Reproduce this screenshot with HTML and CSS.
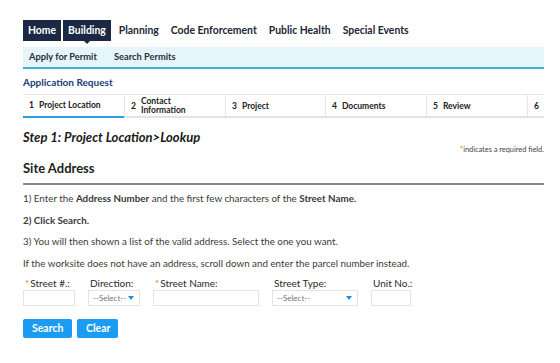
FILE: index.html
```html
<!DOCTYPE html>
<html lang="en">
<head>
    <meta charset="UTF-8">
    <title>Apply for Permit</title>
    <link rel="stylesheet" href="styles.css">
</head>
<body>
<div class="page">
    <!--主导航-->
    <ul class="nav">
        <li class="tab">Home</li>
        <li class="tab active">Building</li>
        <li>Planning</li>
        <li>Code Enforcement</li>
        <li>Public Health</li>
        <li>Special Events</li>
    </ul>
    <!--子导航-->
    <ul class="subnav">
        <li>Apply for Permit</li>
        <li>Search Permits</li>
    </ul>

    <h3 class="app-title">Application Request</h3>
    <!--步骤条-->
    <ul class="steps">
        <li class="on"><span>1</span>Project Location</li>
        <li><span>2</span><em>Contact<br>Information</em></li>
        <li><span>3</span>Project</li>
        <li><span>4</span>Documents</li>
        <li><span>5</span>Review</li>
        <li><span>6</span></li>
    </ul>

    <h2 class="step-title">Step 1: Project Location&gt;Lookup</h2>
    <p class="req-note"><i>*</i>indicates a required field.</p>

    <h2 class="section">Site Address</h2>

    <div class="tips">
        <p>1) Enter the <b>Address Number</b> and the first few characters of the <b>Street Name.</b></p>
        <p><b>2) Click Search.</b></p>
        <p>3) You will then shown a list of the valid address. Select the one you want.</p>
        <p>If the worksite does not have an address, scroll down and enter the parcel number instead.</p>
    </div>

    <!--表单-->
    <div class="fields">
        <div class="field f-num">
            <label><i>*</i>Street #.:</label>
            <div class="input"></div>
        </div>
        <div class="field f-dir">
            <label>Direction:</label>
            <div class="input select"><span>--Select--</span><b></b></div>
        </div>
        <div class="field f-name">
            <label><i>*</i>Street Name:</label>
            <div class="input"></div>
        </div>
        <div class="field f-type">
            <label>Street Type:</label>
            <div class="input select"><span>--Select--</span><b></b></div>
        </div>
        <div class="field f-unit">
            <label>Unit No.:</label>
            <div class="input"></div>
        </div>
    </div>

    <div class="btns">
        <a class="btn search">Search</a>
        <a class="btn clear">Clear</a>
    </div>
</div>
</body>
</html>
```

FILE: styles.css
```css
* {
    margin: 0;
    padding: 0;
    box-sizing: border-box;
}
ul {
    list-style: none;
}
body {
    background-color: #fff;
    font-family: Lato, "Open Sans", sans-serif;
    color: #333;
}
.page {
    width: 521px;
    margin-left: 23px;
    padding-top: 20px;
}

/* 主导航 */
.nav {
    display: flex;
    height: 21px;
    font-size: 10.4px;
    font-weight: 700;
    color: #1c2535;
}
.nav li {
    line-height: 21px;
    padding: 0 6px;
}
.nav li.tab {
    background-color: #1b2944;
    color: #fff;
    margin-right: 2px;
    padding: 0 5px;
    position: relative;
}
.nav li.active:after {
    content: '';
    position: absolute;
    left: 50%;
    bottom: -3px;
    margin-left: -3px;
    border-left: 3px solid transparent;
    border-right: 3px solid transparent;
    border-top: 3px solid #1b2944;
}

/* 子导航 */
.subnav {
    display: flex;
    margin-top: 6px;
    height: 22px;
    background-color: #e6f5fc;
    border-bottom: 2px solid #3fb0cf;
    font-size: 9.3px;
    font-weight: 700;
    color: #2a2f38;
}
.subnav li {
    line-height: 20px;
    padding: 0 6px;
    margin-right: 5px;
}

.app-title {
    margin-top: 6px;
    font-size: 10px;
    line-height: 14px;
    color: #1b3b78;
}

/* 步骤条 */
.steps {
    display: grid;
    grid-template-columns: 101px 101px 100px 101px 101px 1fr;
    margin-top: 5px;
    height: 24px;
    border-top: 1px solid #e6e6e6;
    border-bottom: 2px solid #e3e3e3;
    font-size: 8.5px;
    font-weight: 700;
    color: #222;
}
.steps li {
    display: flex;
    align-items: center;
    padding-left: 6px;
    border-left: 1px solid #e6e6e6;
    height: 21px;
}
.steps li:first-child {
    border-left: none;
}
.steps li.on {
    border-bottom: 2px solid #2d9fd9;
    height: 23px;
    padding-bottom: 2px;
}
.steps span {
    margin-right: 5px;
}
.steps em {
    font-style: normal;
    line-height: 9px;
}

.step-title {
    margin-top: 11px;
    font-size: 13px;
    line-height: 16px;
    font-style: italic;
    font-weight: 700;
    color: #1a1a1a;
}
.req-note {
    text-align: right;
    font-size: 7.4px;
    line-height: 9px;
    color: #444;
}
.req-note i {
    font-style: normal;
    color: #e8791c;
}

.section {
    margin-top: 5px;
    font-size: 13px;
    line-height: 18px;
    font-weight: 700;
    color: #222;
    padding-bottom: 6px;
    border-bottom: 2px solid #8a8a8e;
}

.tips {
    margin-top: 6px;
    font-size: 9.8px;
    line-height: 14px;
    color: #3a3a3a;
}
.tips p {
    margin-bottom: 7.5px;
}
.tips b {
    font-weight: 700;
}

/* 表单 */
.fields {
    display: flex;
    gap: 13px;
    margin-top: 2px;
}
.field label {
    display: block;
    font-size: 10px;
    line-height: 12px;
    color: #2a2a2a;
    padding-left: 2px;
    margin-bottom: 1px;
}
.field label i {
    font-style: normal;
    color: #e8791c;
    margin-right: 1px;
}
.input {
    height: 16px;
    border: 1px solid #e4e4e4;
    background-color: #fff;
}
.select {
    display: flex;
    align-items: center;
    justify-content: space-between;
    padding: 0 5px 0 4px;
    font-size: 8px;
    color: #777;
}
.select b {
    width: 0;
    height: 0;
    border-left: 3.5px solid transparent;
    border-right: 3.5px solid transparent;
    border-top: 4px solid #1e8fe0;
}
.f-num .input {
    width: 52px;
}
.f-dir .input {
    width: 52px;
}
.f-name .input {
    width: 106px;
}
.f-type .input {
    width: 86px;
}
.f-unit .input {
    width: 40px;
}

.btns {
    display: flex;
    gap: 5px;
    margin-top: 13px;
}
.btn {
    display: block;
    height: 19px;
    line-height: 19px;
    padding: 0 9px;
    background-color: #1c9bf2;
    border-radius: 2px;
    color: #fff;
    font-size: 10.5px;
    font-weight: 700;
}
.search {
    width: 49px;
}
.clear {
    width: 41px;
}
```
